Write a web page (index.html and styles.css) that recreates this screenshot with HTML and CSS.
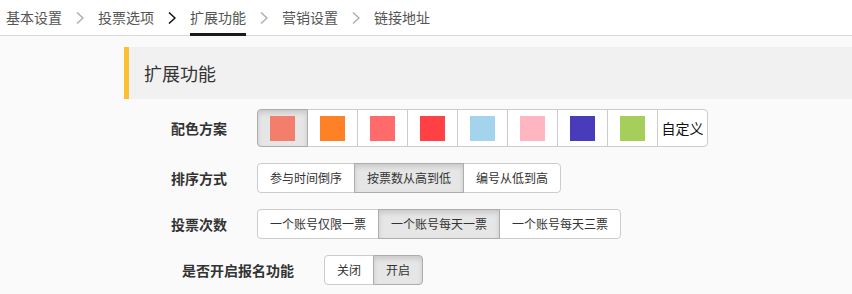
FILE: index.html
```html
<!DOCTYPE html>
<html lang="zh-CN">
<head>
  <meta charset="UTF-8">
  <title>扩展功能</title>
  <link rel="stylesheet" href="styles.css">
</head>
<body>
  <nav class="steps">
    <a class="step">基本设置</a>
    <span class="sep"><svg width="8" height="12" viewBox="0 0 8 12"><path d="M1 0.5 L7 6 L1 11.5" fill="none" stroke="#aaa" stroke-width="1.3"/></svg></span>
    <a class="step">投票选项</a>
    <span class="sep"><svg width="8" height="12" viewBox="0 0 8 12"><path d="M1 0.5 L7 6 L1 11.5" fill="none" stroke="#111" stroke-width="1.5"/></svg></span>
    <a class="step active">扩展功能</a>
    <span class="sep"><svg width="8" height="12" viewBox="0 0 8 12"><path d="M1 0.5 L7 6 L1 11.5" fill="none" stroke="#aaa" stroke-width="1.3"/></svg></span>
    <a class="step">营销设置</a>
    <span class="sep"><svg width="8" height="12" viewBox="0 0 8 12"><path d="M1 0.5 L7 6 L1 11.5" fill="none" stroke="#aaa" stroke-width="1.3"/></svg></span>
    <a class="step">链接地址</a>
  </nav>

  <div class="content">
    <h2 class="section-title">扩展功能</h2>

    <div class="form-row">
      <label class="form-label">配色方案</label>
      <div class="btn-group">
        <button class="btn swatch-btn active"><span class="swatch" style="background:#f27e6b"></span></button>
        <button class="btn swatch-btn"><span class="swatch" style="background:#ff8125"></span></button>
        <button class="btn swatch-btn"><span class="swatch" style="background:#ff6b6b"></span></button>
        <button class="btn swatch-btn"><span class="swatch" style="background:#ff4044"></span></button>
        <button class="btn swatch-btn"><span class="swatch" style="background:#a4d3ee"></span></button>
        <button class="btn swatch-btn"><span class="swatch" style="background:#ffb6c1"></span></button>
        <button class="btn swatch-btn"><span class="swatch" style="background:#483cba"></span></button>
        <button class="btn swatch-btn"><span class="swatch" style="background:#a5ce5a"></span></button>
        <button class="btn custom-btn">自定义</button>
      </div>
    </div>

    <div class="form-row">
      <label class="form-label">排序方式</label>
      <div class="btn-group">
        <button class="btn btn-sm">参与时间倒序</button>
        <button class="btn btn-sm active">按票数从高到低</button>
        <button class="btn btn-sm">编号从低到高</button>
      </div>
    </div>

    <div class="form-row">
      <label class="form-label">投票次数</label>
      <div class="btn-group">
        <button class="btn btn-sm">一个账号仅限一票</button>
        <button class="btn btn-sm active">一个账号每天一票</button>
        <button class="btn btn-sm">一个账号每天三票</button>
      </div>
    </div>

    <div class="form-row form-row-wide">
      <label class="form-label">是否开启报名功能</label>
      <div class="btn-group">
        <button class="btn btn-sm">关闭</button>
        <button class="btn btn-sm active">开启</button>
      </div>
    </div>
  </div>
</body>
</html>
```

FILE: styles.css
```css
body {
  margin: 0;
  font-family: "Noto Sans CJK SC", "Microsoft YaHei", sans-serif;
  background-color: #fafafa;
  color: #333;
}

.steps {
  display: flex;
  align-items: center;
  height: 35px;
  padding-left: 6px;
  background-color: #fff;
  border-bottom: 1px solid #d9d9d9;
}

.step {
  font-size: 14px;
  color: #555;
  line-height: 35px;
  height: 35px;
}

.step.active {
  height: 33px;
  line-height: 35px;
  margin-bottom: -1px;
  border-bottom: 3px solid #1a1a1a;
}

.sep {
  display: flex;
  margin: 1px 14px 0 14px;
}

.content {
  padding-top: 11px;
}

.section-title {
  margin: 0 0 10px 124px;
  height: 52px;
  line-height: 52px;
  padding-left: 15px;
  border-left: 5px solid #fbc02d;
  background-color: #f1f1f1;
  font-size: 18px;
  font-weight: normal;
  color: #333;
}

.form-row {
  display: flex;
  align-items: center;
  padding-left: 171px;
  margin-bottom: 16px;
}

.form-row-wide {
  padding-left: 182px;
}

.form-label {
  font-size: 14px;
  font-weight: bold;
  color: #333;
  margin-right: 30px;
}

.btn-group {
  display: flex;
}

.btn {
  font-family: inherit;
  background-color: #fff;
  border: 1px solid #ccc;
  margin: 0 0 0 -1px;
  color: #333;
  cursor: pointer;
}

.btn:first-child {
  margin-left: 0;
  border-radius: 4px 0 0 4px;
}

.btn:last-child {
  border-radius: 0 4px 4px 0;
}

.btn.active {
  position: relative;
  background-color: #e6e6e6;
  border-color: #adadad;
  box-shadow: inset 0 3px 5px rgba(0, 0, 0, 0.125);
}

.swatch-btn {
  padding: 6px 12px 5px;
  display: flex;
}

.swatch {
  display: block;
  width: 25px;
  height: 25px;
}

.custom-btn {
  width: 51px;
  padding: 0;
  font-size: 14px;
  color: #111;
}

.btn-sm {
  font-size: 12px;
  line-height: 18px;
  padding: 5px 12px;
}
```
